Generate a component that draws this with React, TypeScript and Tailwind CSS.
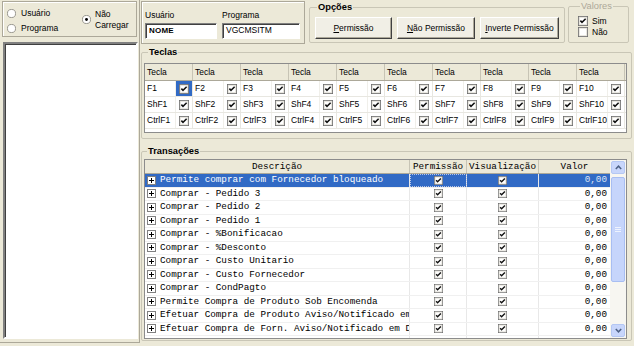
import React from "react"

const SANS = "font-['Liberation_Sans',Arial,sans-serif]"
const MONO = "font-['Liberation_Mono','Courier_New',monospace]"

const keys = ["F1", "F2", "F3", "F4", "F5", "F6", "F7", "F8", "F9", "F10"]
const prefixes = ["", "Sh", "Ctrl"]

const transacoes = [
  "Permite comprar com Fornecedor bloqueado",
  "Comprar - Pedido 3",
  "Comprar - Pedido 2",
  "Comprar - Pedido 1",
  "Comprar - %Bonificacao",
  "Comprar - %Desconto",
  "Comprar - Custo Unitario",
  "Comprar - Custo Fornecedor",
  "Comprar - CondPagto",
  "Permite Compra de Produto Sob Encomenda",
  "Efetuar Compra de Produto Aviso/Notificado em",
  "Efetuar Compra de Forn. Aviso/Notificado em D",
  "",
]

// classic win32 checkbox
const CheckBox = ({ checked = true, size = 11 }: { checked?: boolean; size?: number }) => (
  <svg width={size} height={size} viewBox="0 0 11 11" className="block shrink-0">
    <rect x="0.5" y="0.5" width="10" height="10" fill="#fff" stroke="#6f6f6f" />
    <rect x="1.5" y="1.5" width="8" height="8" fill="none" stroke="#e4e2da" />
    {checked && (
      <path d="M2.6 5.1 L4.4 7 L8.4 3" fill="none" stroke="#111" strokeWidth="1.7" />
    )}
  </svg>
)

const Radio = ({ checked = false }: { checked?: boolean }) => (
  <svg width="9" height="9" viewBox="0 0 10 10" className="block shrink-0">
    <circle cx="5" cy="5" r="4.5" fill="#fff" stroke="#8e8d86" />
    {checked && <circle cx="5" cy="5" r="1.6" fill="#000" />}
  </svg>
)

const PlusBox = () => (
  <svg width="9" height="9" viewBox="0 0 9 9" className="block shrink-0">
    <rect x="0.5" y="0.5" width="8" height="8" fill="#fff" stroke="#808080" />
    <path d="M2 4.5 H7 M4.5 2 V7" stroke="#000" strokeWidth="1" />
  </svg>
)

const Arrow = ({ up }: { up?: boolean }) => (
  <svg width="7" height="5" viewBox="0 0 7 5" className="block">
    <path d={up ? "M0.8 4 L3.5 1.2 L6.2 4" : "M0.8 1 L3.5 3.8 L6.2 1"} fill="none" stroke="#4d6185" strokeWidth="1.5" />
  </svg>
)

const Button = ({ accel, rest, w }: { accel: string; rest: string; w: string }) => (
  <button
    className={`${w} h-[22px] bg-[#F1EFE6] border border-t-white border-l-white border-r-[#404040] border-b-[#404040] shadow-[inset_-1px_-1px_0_#aca899] flex items-center justify-center text-[8.5px] text-black`}
  >
    <span className="underline">{accel}</span>
    {rest}
  </button>
)

const ScrollBar = () => (
  <div className="w-[16px] h-full bg-[#F7F6F1] flex flex-col items-center py-[1px]">
    <div className="w-[14px] h-[13px] rounded-[2px] bg-[#C8D6FB] border border-[#B4C7F3] flex items-center justify-center">
      <Arrow up />
    </div>
    <div className="mt-[3px] w-[14px] h-[105px] rounded-[2px] bg-[#C6D5FB] border border-[#A8BEF2] flex flex-col items-center justify-center gap-[1px]">
      <div className="w-[6px] h-px bg-[#EEF3FE]" />
      <div className="w-[6px] h-px bg-[#EEF3FE]" />
      <div className="w-[6px] h-px bg-[#EEF3FE]" />
    </div>
    <div className="flex-1" />
    <div className="w-[14px] h-[13px] rounded-[2px] bg-[#C8D6FB] border border-[#B4C7F3] flex items-center justify-center">
      <Arrow />
    </div>
  </div>
)

export default function App() {
  return (
    <div className={`${SANS} w-[634px] h-[346px] bg-[#ECE9D8] flex overflow-hidden text-[8.5px] text-black`}>
      {/* Left panel */}
      <div className="w-[140px] h-[343px] flex flex-col border-r border-b border-[#ACA899]">
        <div className="mx-[2px] mt-[1px] h-[36px] border border-[#ACA899] shadow-[inset_1px_1px_0_#fff] flex">
          <div className="w-[79px] pl-[4px] pt-[4px] flex flex-col">
            <div className="h-[15px] flex items-center gap-[5px]">
              <Radio />
              <span>Usuário</span>
            </div>
            <div className="h-[15px] flex items-center gap-[5px]">
              <Radio />
              <span>Programa</span>
            </div>
          </div>
          <div className="flex items-center gap-[4px] pt-[1px]">
            <Radio checked />
            <div className="leading-[11px]">
              <div>Não</div>
              <div>Carregar</div>
            </div>
          </div>
        </div>
        <div className="mt-[5px] ml-[3px] mr-[1px] h-[297px] bg-white border-2 border-t-[#808080] border-l-[#808080] border-r-white border-b-white shadow-[inset_1px_1px_0_#404040]" />
      </div>

      {/* Right panel */}
      <div className="w-[494px] flex flex-col">
        {/* Top row */}
        <div className="h-[45px] flex">
          <div className="ml-[1px] mt-[1px] w-[164px] h-[43px] border border-[#ACA899] shadow-[inset_1px_1px_0_#fff] flex gap-[5px] pl-[3px] pt-[8px]">
            <div className="flex flex-col">
              <span className="leading-[10px]">Usuário</span>
              <div className="mt-[3px] w-[72px] h-[16px] bg-white border border-t-[#808080] border-l-[#808080] border-r-white border-b-white shadow-[inset_1px_1px_0_#404040] flex items-end pl-[3px] pb-[1px] text-[8px] font-semibold tracking-[0.2px]">
                NOME
              </div>
            </div>
            <div className="flex flex-col">
              <span className="leading-[10px]">Programa</span>
              <div className="mt-[3px] w-[78px] h-[16px] bg-white border border-t-[#808080] border-l-[#808080] border-r-white border-b-white shadow-[inset_1px_1px_0_#404040] flex items-end pl-[3px] pb-[1px] text-[8.5px]">
                VGCMSITM
              </div>
            </div>
          </div>

          <fieldset className="ml-[4px] mt-[2px] w-[256px] h-[41px] border border-[#C9C6B6] rounded-[2px] pl-[5px] pt-[4px]">
            <legend className="ml-[2px] px-[1px] text-[9.3px] font-bold leading-[11px]">Opções</legend>
            <div className="flex gap-[5px]">
              <Button accel="P" rest="ermissão" w="w-[77px]" />
              <Button accel="N" rest="ão Permissão" w="w-[78px]" />
              <Button accel="I" rest="nverte Permissão" w="w-[79px]" />
            </div>
          </fieldset>

          <fieldset className="ml-[3px] mt-[1px] w-[61px] h-[42px] border border-[#C9C6B6] rounded-[2px] pl-[9px] pt-[4px]">
            <legend className="ml-[2px] px-[1px] text-[9.3px] leading-[11px] text-[#ACA899]">Valores</legend>
            <div className="flex flex-col gap-[1px]">
              <div className="h-[10px] flex items-center gap-[4px]">
                <CheckBox size={10} />
                <span>Sim</span>
              </div>
              <div className="h-[10px] flex items-center gap-[4px]">
                <CheckBox size={10} checked={false} />
                <span>Não</span>
              </div>
            </div>
          </fieldset>
        </div>

        {/* Teclas */}
        <fieldset className="mt-[2px] ml-[1px] w-[491px] h-[92px] border border-[#C9C6B6] rounded-[2px] pl-[2px] pt-[5px]">
          <legend className="ml-[4px] px-[1px] text-[9.3px] font-bold leading-[11px]">Teclas</legend>
          <div className="w-[483px] h-[70px] bg-white border border-[#8C8C8C] flex flex-col">
            <div className="h-[17px] flex bg-[#ECE9D8] border-b border-[#ACA899]">
              {keys.map((k) => (
                <div key={k} className="w-[48px] h-full flex items-center pl-[2px] border-r border-[#C7C4B5]">
                  Tecla
                </div>
              ))}
            </div>
            {prefixes.map((p, r) => (
              <div key={p} className="h-[16px] flex border-b border-[#E8E7E1]">
                {keys.map((k, i) => (
                  <div key={k} className="w-[48px] h-full flex border-r border-[#E8E7E1]">
                    <div className="w-[31px] h-full flex items-center pl-[2px] border-r border-[#F0EFEA] whitespace-nowrap">
                      {p + k}
                    </div>
                    <div
                      className={`flex-1 h-full flex items-center justify-center ${
                        r === 0 && i === 0 ? "bg-[#316AC5]" : ""
                      }`}
                    >
                      <CheckBox size={10} />
                    </div>
                  </div>
                ))}
              </div>
            ))}
          </div>
        </fieldset>

        {/* Transações */}
        <fieldset className="mt-[7px] ml-[1px] w-[491px] h-[195px] border border-[#C9C6B6] rounded-[2px] pl-[2px] pt-[2px]">
          <legend className="ml-[3px] px-[1px] text-[9.3px] font-bold leading-[11px]">Transações</legend>
          <div className="w-[483px] h-[180px] bg-white border border-[#8C8C8C] flex">
            <div className={`${MONO} w-[465px] h-full flex flex-col overflow-hidden text-[9.3px]`}>
              <div className="h-[14px] shrink-0 flex bg-[#ECE9D8] border-b border-[#ACA899]">
                <div className="w-[265px] flex items-center justify-center border-r border-[#C7C4B5]">Descrição</div>
                <div className="w-[57px] flex items-center justify-center border-r border-[#C7C4B5]">Permissão</div>
                <div className="w-[72px] flex items-center justify-center border-r border-[#C7C4B5]">Visualização</div>
                <div className="w-[71px] flex items-center justify-center">Valor</div>
              </div>
              {transacoes.map((t, i) => {
                const sel = i === 0
                return (
                  <div key={i} className={`h-[13.5px] shrink-0 flex border-b border-[#F0F0F0] ${sel ? "bg-[#316AC5]" : ""}`}>
                    <div className="w-[265px] h-full flex items-center pl-[2px] gap-[4px] border-r border-[#E8E8E8] overflow-hidden whitespace-nowrap">
                      <PlusBox />
                      <span className={sel ? "text-white" : ""}>{t}</span>
                    </div>
                    <div
                      className={`w-[57px] h-full flex items-center justify-center border-r border-[#E8E8E8] ${
                        sel ? "outline outline-1 outline-dotted outline-[#b8c6e6] -outline-offset-1" : ""
                      }`}
                    >
                      <CheckBox size={9} />
                    </div>
                    <div className="w-[72px] h-full flex items-center justify-center border-r border-[#E8E8E8]">
                      <CheckBox size={9} />
                    </div>
                    <div className={`w-[71px] h-full flex items-center justify-end pr-[3px] ${sel ? "text-[#dce5f6]" : ""}`}>
                      {t ? "0,00" : ""}
                    </div>
                  </div>
                )
              })}
            </div>
            <ScrollBar />
          </div>
        </fieldset>
      </div>
    </div>
  )
}
